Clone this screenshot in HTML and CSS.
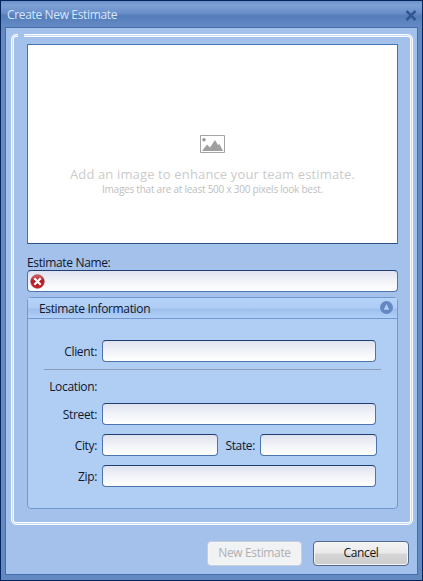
FILE: index.html
```html
<!DOCTYPE html>
<html lang="en">
<head>
<meta charset="utf-8">
<title>Create New Estimate</title>
<link rel="stylesheet" href="styles.css">
</head>
<body>
<div class="window">
  <header class="titlebar">
    <span class="title">Create New Estimate</span>
    <svg class="close" width="12" height="11" viewBox="0 0 12 11"><path d="M1.5 1 10.5 10M10.5 1 1.5 10" stroke="#34568f" stroke-width="2.5"/></svg>
  </header>
  <main class="content">
    <section class="frame">
      <div class="drop">
        <svg class="picture" width="25" height="18" viewBox="0 0 25 18"><path d="M.5.5h24v17H.5z" fill="#fff" stroke="#a3a3a3"/><circle cx="4" cy="4.7" r="1.8" fill="#999"/><path d="M2 16 7 9.5l3 3L15 5l3 5 1.5-1L23 16z" fill="#a0a0a0"/></svg>
        <div class="drop-title">Add an image to enhance your team estimate.</div>
        <div class="drop-hint">Images that are at least 500 x 300 pixels look best.</div>
      </div>
      <div class="name-label">Estimate Name:</div>
      <div class="field name-field">
        <svg width="15" height="15" viewBox="0 0 15 15"><defs><linearGradient id="red" x2="0" y2="1"><stop stop-color="#d46a6d"/><stop offset=".45" stop-color="#b51f29"/><stop offset="1" stop-color="#c91c24"/></linearGradient></defs><circle cx="7.5" cy="7.5" r="6.8" fill="url(#red)" stroke="#a33a45" stroke-width=".7"/><path d="m4.3 4.3 6.4 6.4m0-6.4-6.4 6.4" stroke="#fff" stroke-width="2.2"/></svg>
      </div>
      <div class="panel">
        <div class="panel-head">
          <span class="panel-title">Estimate Information</span>
          <svg width="13" height="13" viewBox="0 0 13 13"><circle cx="6.5" cy="6.5" r="6.5" fill="#6588c5"/><path d="M6.5 3 9.2 8.8H3.8z" fill="#b3cff5"/></svg>
        </div>
        <div class="form">
          <div class="row"><span class="label client">Client:</span><div class="field wide"></div></div>
          <div class="rule"></div>
          <div class="row location"><span class="label loc">Location:</span></div>
          <div class="row"><span class="label street">Street:</span><div class="field wide"></div></div>
          <div class="row pair"><span class="label city">City:</span><div class="field half"></div><span class="label state">State:</span><div class="field half last"></div></div>
          <div class="row zip-row"><span class="label zip">Zip:</span><div class="field wide"></div></div>
        </div>
      </div>
    </section>
    <footer class="actions">
      <div class="button disabled">New Estimate</div>
      <div class="button cancel">Cancel</div>
    </footer>
  </main>
</div>
</body>
</html>
```

FILE: styles.css
```css
* { box-sizing: border-box; }
body { margin: 0; font: 12px/16px "Open Sans", "Noto Sans", sans-serif; letter-spacing: -.35px; color: #10182b; }
svg { display: block; flex: none; }
.window { width: 423px; height: 581px; padding: 0 4px 5px; border: 1px solid #06245c; background: #6289c2; display: flex; flex-direction: column; }
.titlebar { height: 26px; margin: 0 -4px; padding: 2px 5px 0 6px; display: flex; align-items: center; justify-content: space-between; background: linear-gradient(#6c91cc 0, #7ea1d5 15%, #6b8fca 45%, #557db9 58%, #658bc6 100%); }
.title { color: #d4e7ff; }
.content { flex: 1; border: 1px solid #456faa; background: #a3c1ea; padding: 6px 4px 0 5px; }
.frame { position: relative; width: 402px; height: 491px; padding: 9px 15px 0; border: 1px solid #fcfdff; border-radius: 5px; box-shadow: inset 0 0 0 1px #c8dbf4, inset 0 0 0 2px #fcfdff; }
.frame::before { content: ""; position: absolute; left: 6px; top: -1px; width: 6px; height: 3px; background: #a3c1ea; }
.drop { height: 200px; width: 371px; border: 1px solid #3f75b5; border-bottom-color: #2d5285; background: #fff; display: flex; flex-direction: column; align-items: center; padding-top: 90px; }
.drop-title { margin-top: 11px; font-size: 13px; line-height: 20px; color: #cbcbcb; white-space: nowrap; letter-spacing: .14px; }
.drop-hint { margin-top: -1px; font-size: 10px; line-height: 12px; color: #c0c0c0; white-space: nowrap; letter-spacing: -.24px; }
.name-label { height: 26px; padding-top: 11px; }
.field { height: 22px; border: 1px solid #4d75ad; border-top-color: #203e72; border-radius: 4px; background: linear-gradient(#dfe3ee, #f1f3f8 50%, #fff); }
.name-field { width: 371px; padding: 3px 2px; }
.panel { width: 371px; height: 212px; margin-top: 5px; border: 1px solid #7397d0; border-radius: 4px; background: #b0cef3; }
.panel-head { height: 21px; padding: 3px 4px 0 11px; border-bottom: 1px solid #7397d0; display: flex; justify-content: space-between; background: linear-gradient(#b5d2f7 0, #afcef5 50%, #9ebfec 55%, #b0d0f8); }
.form { padding: 21px 16px 0; }
.row { display: flex; align-items: center; height: 22px; }
.label { width: 53px; margin-right: 5px; padding-top: 2px; text-align: right; white-space: nowrap; }
.wide { width: 274px; }
.half { width: 116px; }
.last { width: 117px; }
.state { width: 37px; }
.rule { width: 337px; height: 1px; margin: 7px 0 6px; background: #8b9db2; }
.location { height: 20px; margin-bottom: 7px; }
.pair { margin: 9px 0; }
.actions { display: flex; justify-content: flex-end; gap: 11px; padding: 16px 4px 0; }
.button { width: 96px; height: 25px; border: 1px solid #52688d; border-radius: 4px; text-align: center; line-height: 22px; color: #161616; background: linear-gradient(#f4f4f4, #e9e9e9 48%, #d5d5d5 53%, #cdcdcd); box-shadow: inset 0 0 0 1px #f5f5f5; }
.disabled { width: 95px; border-color: #c6cedb; color: #b0b0b0; background: #f1f2f4; }
```
